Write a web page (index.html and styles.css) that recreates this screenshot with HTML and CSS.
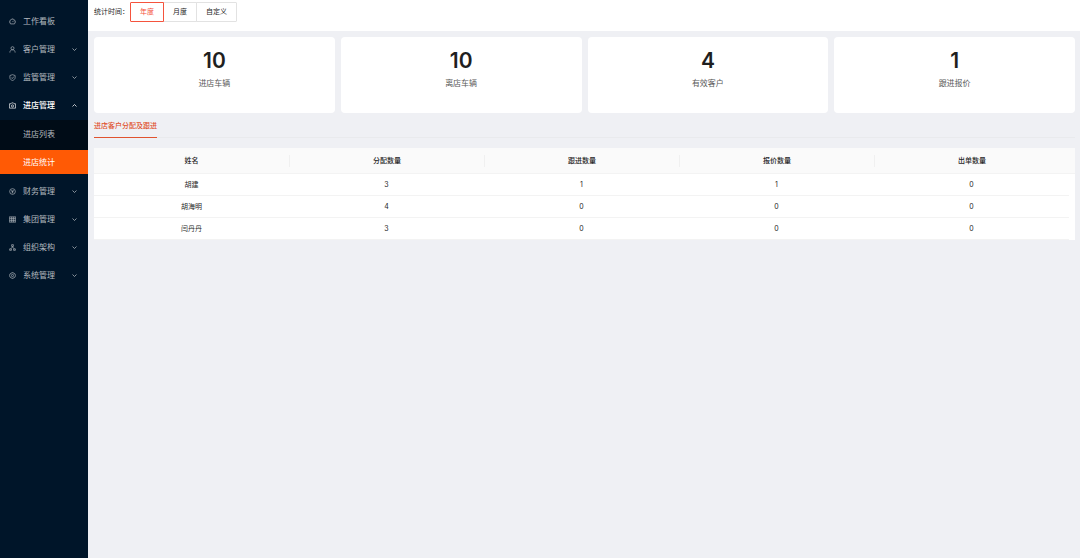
FILE: index.html
```html
<!DOCTYPE html>
<html lang="zh-CN">
<head>
    <meta charset="UTF-8">
    <meta name="viewport" content="width=device-width, initial-scale=1.0">
    <title>进店统计</title>
    <link rel="stylesheet" href="styles.css">
</head>
<body>

    <!-- Sidebar -->
    <nav class="sidebar">
        <ul class="menu">
            <li>
                <a class="menu-item" href="#">
                    <svg class="icon" viewBox="0 0 16 16"><path d="M3.5 13.5a6.5 6.5 0 1 1 9 0z"/><path d="M8 9l3-3M8 3.5v1M3.5 9h1M11.5 9h1"/></svg>
                    <span>工作看板</span>
                </a>
            </li>
            <li>
                <a class="menu-item" href="#">
                    <svg class="icon" viewBox="0 0 16 16"><circle cx="8" cy="5" r="3.5"/><path d="M2 15c0-4 2.500-6.500 6-6.500s6 2.500 6 6.500"/></svg>
                    <span>客户管理</span>
                    <svg class="arrow" viewBox="0 0 10 10"><path d="M1 3l4 4 4-4"/></svg>
                </a>
            </li>
            <li>
                <a class="menu-item" href="#">
                    <svg class="icon" viewBox="0 0 16 16"><path d="M8 1.500l6 2v5c0 3-2.500 5-6 6.500-3.500-1.500-6-3.500-6-6.500v-5z"/><path d="M5 8l2.500 2.500L11 6"/></svg>
                    <span>监管管理</span>
                    <svg class="arrow" viewBox="0 0 10 10"><path d="M1 3l4 4 4-4"/></svg>
                </a>
            </li>
            <li>
                <a class="menu-item open" href="#">
                    <svg class="icon" viewBox="0 0 16 16"><path d="M1 4h3.500L6 2h4l1.500 2H15v10H1z"/><circle cx="8" cy="9" r="2.500"/></svg>
                    <span>进店管理</span>
                    <svg class="arrow" viewBox="0 0 10 10"><path d="M1 7l4-4 4 4"/></svg>
                </a>
                <ul class="submenu">
                    <li><a class="menu-item" href="#">进店列表</a></li>
                    <li><a class="menu-item active" href="#">进店统计</a></li>
                </ul>
            </li>
            <li>
                <a class="menu-item" href="#">
                    <svg class="icon" viewBox="0 0 16 16"><circle cx="8" cy="8" r="6.500"/><path d="M5.500 4.500L8 8l2.500-3.500M8 8v4M5.500 8.500h5"/></svg>
                    <span>财务管理</span>
                    <svg class="arrow" viewBox="0 0 10 10"><path d="M1 3l4 4 4-4"/></svg>
                </a>
            </li>
            <li>
                <a class="menu-item" href="#">
                    <svg class="icon" viewBox="0 0 16 16"><path d="M1.500 1.500v13M14.500 1.500v13M1 2h14M1 6h14M1 10h14M1 14h14M6 2v12M10 2v12"/></svg>
                    <span>集团管理</span>
                    <svg class="arrow" viewBox="0 0 10 10"><path d="M1 3l4 4 4-4"/></svg>
                </a>
            </li>
            <li>
                <a class="menu-item" href="#">
                    <svg class="icon" viewBox="0 0 16 16"><path d="M6 1.500h4v4H6zM1.500 11h4v3.500h-4zM10.500 11h4v3.500h-4zM8 5.500v2.500M3.500 11L8 7l4.500 4"/></svg>
                    <span>组织架构</span>
                    <svg class="arrow" viewBox="0 0 10 10"><path d="M1 3l4 4 4-4"/></svg>
                </a>
            </li>
            <li>
                <a class="menu-item" href="#">
                    <svg class="icon" viewBox="0 0 16 16"><path d="M6 1.500h4l1 2 2.500.5 1.500 4-1.500 4-2.500.5-1 2H6l-1-2-2.500-.5L1 8l1.500-4L5 3.500z"/><circle cx="8" cy="8" r="2.500"/></svg>
                    <span>系统管理</span>
                    <svg class="arrow" viewBox="0 0 10 10"><path d="M1 3l4 4 4-4"/></svg>
                </a>
            </li>
        </ul>
    </nav>

    <main class="main">
        <!-- Time Filter -->
        <div class="toolbar">
            <span id="range-label">统计时间：</span>
            <div class="range" role="group" aria-labelledby="range-label">
                <button type="button" class="active" aria-pressed="true">年度</button>
                <button type="button" aria-pressed="false">月度</button>
                <button type="button" aria-pressed="false">自定义</button>
            </div>
        </div>

        <div class="content">
            <!-- Totals -->
            <section class="cards">
                <div class="card">
                    <strong>10</strong>
                    <span>进店车辆</span>
                </div>
                <div class="card">
                    <strong>10</strong>
                    <span>离店车辆</span>
                </div>
                <div class="card">
                    <strong>4</strong>
                    <span>有效客户</span>
                </div>
                <div class="card">
                    <strong>1</strong>
                    <span>跟进报价</span>
                </div>
            </section>

            <!-- Tabs -->
            <div class="tabs" role="tablist">
                <button type="button" class="tab" role="tab" aria-selected="true">进店客户分配及跟进</button>
            </div>

            <!-- Staff Table -->
            <table class="stats">
                <colgroup>
                    <col span="5">
                    <col class="gutter">
                </colgroup>
                <thead>
                    <tr>
                        <th><div>姓名</div></th>
                        <th><div>分配数量</div></th>
                        <th><div>跟进数量</div></th>
                        <th><div>报价数量</div></th>
                        <th><div>出单数量</div></th>
                        <td></td>
                    </tr>
                </thead>
                <tbody>
                    <tr><td>胡建</td><td>3</td><td>1</td><td>1</td><td>0</td></tr>
                    <tr><td>胡海明</td><td>4</td><td>0</td><td>0</td><td>0</td></tr>
                    <tr><td>闫丹丹</td><td>3</td><td>0</td><td>0</td><td>0</td></tr>
                </tbody>
            </table>
        </div>
    </main>

</body>
</html>
```
FILE: styles.css
```css
/* General Styles */
* {
    box-sizing: border-box;
}

body {
    display: flex;
    min-height: 100vh;
    margin: 0;
    font-family: Inter, "Noto Sans CJK SC", sans-serif;
    font-size: 7px;
    line-height: 12px;
    color: #262626;
    background-color: #eff0f4;
}

ul {
    list-style: none;
    margin: 0;
    padding: 0;
}

button {
    font: inherit;
    color: inherit;
    cursor: pointer;
}

/* Sidebar */
.sidebar {
    flex: 0 0 88px;
    padding-top: 9px;
    background: #001529;
}

.menu > li {
    margin-bottom: 4px;
}

.menu-item {
    display: flex;
    align-items: center;
    height: 24px;
    padding: 0 11px 0 9px;
    font-size: 8px;
    color: #b3b9bf;
    text-decoration: none;
}

.menu-item:hover,
.menu-item.open {
    color: #fff;
}

.menu-item.open {
    font-weight: 500;
}

.icon,
.arrow {
    fill: none;
    stroke: currentColor;
}

.icon {
    width: 7px;
    height: 7px;
    margin-right: 7px;
    stroke-width: 1.5;
}

.arrow {
    width: 5px;
    height: 5px;
    margin-left: auto;
    stroke-width: 1.5;
}

.submenu {
    margin: 3px 0 5px;
    padding-top: 2px;
    background: #000c17;
}

.submenu li + li {
    padding-top: 4px;
}

.submenu .menu-item {
    padding-left: 23px;
}

.submenu .active {
    color: #fff;
    background: #ff5a05;
}

/* Time Filter */
.main {
    flex: 1;
    min-width: 0;
}

.toolbar {
    display: flex;
    align-items: center;
    gap: 2px;
    padding: 2px 6px 9px;
    background: #fff;
}

.range {
    display: flex;
}

.range button {
    height: 20px;
    margin-left: -1px;
    padding: 0 9px;
    background: #fff;
    border: 1px solid #e2e2e2;
}

.range button:first-child {
    border-radius: 1px 0 0 1px;
}

.range button:last-child {
    border-radius: 0 1px 1px 0;
}

.range .active {
    position: relative;
    color: #f5533d;
    border-color: #f5533d;
}

/* Cards */
.content {
    padding: 6px 5px 6px 6px;
}

.cards {
    display: grid;
    grid-template-columns: repeat(4, 1fr);
    gap: 6px;
}

.card {
    display: flex;
    flex-direction: column;
    align-items: center;
    padding: 12px 6px 24px;
    background: #fff;
    border-radius: 4px;
}

.card strong {
    font-size: 21px;
    font-weight: 600;
    line-height: 24px;
    color: #1f1f1f;
}

.card span {
    padding-top: 4px;
    font-size: 8px;
    color: #595959;
}

/* Tabs */
.tabs {
    display: flex;
    margin-bottom: 10px;
    border-bottom: 1px solid #e9eaed;
}

.tab {
    margin-bottom: -1px;
    padding: 7px 0 5px;
    font-weight: 500;
    color: #e0532f;
    background: none;
    border: 0;
    border-bottom: 1px solid #e0532f;
}

/* Staff Table */
.stats {
    width: 100%;
    table-layout: fixed;
    border-collapse: separate;
    border-spacing: 0;
    text-align: center;
    background: #fff;
}

/* room for the scrollbar */
.stats .gutter {
    width: 6px;
}

.stats thead {
    background: #fafafa;
}

.stats th {
    padding: 7px 0 6px;
    font-weight: 500;
    border-bottom: 1px solid #f3f3f3;
}

.stats th + th div {
    border-left: 1px solid #f0f0f0;
}

.stats td {
    padding: 5px 0 4px;
    border-bottom: 1px solid #f3f3f3;
}
```
